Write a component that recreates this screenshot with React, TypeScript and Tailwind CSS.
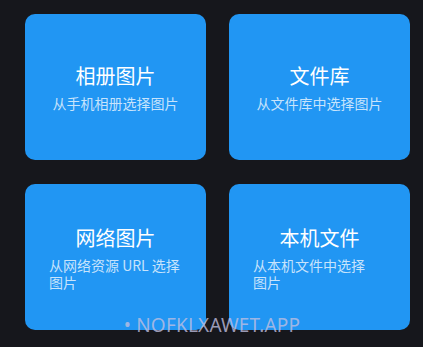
const sources = [
  { title: "相册图片", desc: "从手机相册选择图\u2060片" },
  { title: "文件库", desc: "从文件库中选择图\u2060片" },
  { title: "网络图片", desc: "从网络资源 URL 选择图\u2060片" },
  { title: "本机文件", desc: "从本机文件中选择图\u2060片" },
];

const App = () => {
  return (
    <div className="relative w-[423px] h-[347px] overflow-hidden bg-[#16171c] font-['Noto_Sans_CJK_SC','Noto_Sans',sans-serif]">
      <div className="grid grid-cols-[181px_181px] gap-x-[23px] gap-y-[24px] pl-[25px] pt-[14px]">
        {sources.map((s) => (
          <button
            key={s.title}
            className="h-[146px] rounded-[10px] bg-[#2196f3] flex flex-col items-center justify-center px-6"
          >
            <span className="text-[20px] leading-7 text-white">{s.title}</span>
            <span className="mt-[5px] text-[14px] leading-[17px] text-left text-white/75">{s.desc}</span>
          </button>
        ))}
      </div>
      <div className="absolute left-0 right-0 top-[313px] flex justify-center">
        <span className="ml-[1px] text-[19px] leading-6 tracking-[0.2px] text-[#c0bfe0]/80 font-['Noto_Sans',sans-serif]">
          • NOFKLXAWET.APP
        </span>
      </div>
    </div>
  );
};

export default App;
